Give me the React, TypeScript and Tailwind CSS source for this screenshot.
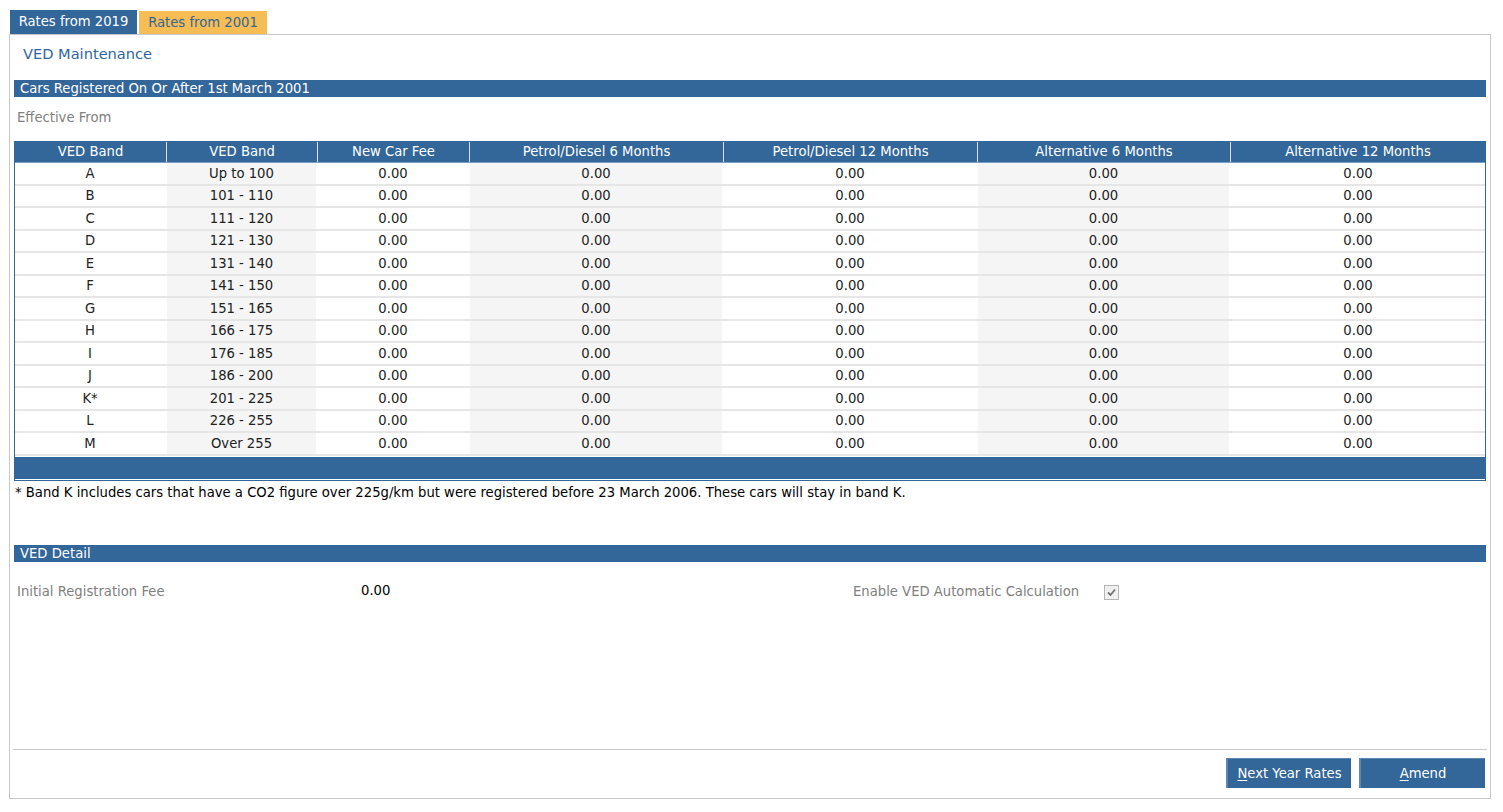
import React from "react";

const bands: [string, string][] = [
  ["A", "Up to 100"],
  ["B", "101 - 110"],
  ["C", "111 - 120"],
  ["D", "121 - 130"],
  ["E", "131 - 140"],
  ["F", "141 - 150"],
  ["G", "151 - 165"],
  ["H", "166 - 175"],
  ["I", "176 - 185"],
  ["J", "186 - 200"],
  ["K*", "201 - 225"],
  ["L", "226 - 255"],
  ["M", "Over 255"],
];

const headers = [
  "VED Band",
  "VED Band",
  "New Car Fee",
  "Petrol/Diesel 6 Months",
  "Petrol/Diesel 12 Months",
  "Alternative 6 Months",
  "Alternative 12 Months",
];

const widths = ["w-[152px]", "w-[151px]", "w-[152px]", "w-[254px]", "w-[254px]", "w-[253px]", "flex-1"];

export default function App() {
  return (
    <div
      className="w-[1503px] h-[812px] bg-white text-[13.2px] text-[#222]"
      style={{ fontFamily: 'Tahoma, "DejaVu Sans", sans-serif' }}
    >
      <div className="pt-[10px] pl-[10px] pr-[12px]">
        {/* Tabs */}
        <div className="flex items-end h-[24px] gap-[2px]">
          <div className="h-[24px] w-[127px] bg-[#336699] text-white flex items-center justify-center">
            Rates from 2019
          </div>
          <div className="h-[23px] w-[128px] bg-[#f6bd55] text-[#336699] flex items-center justify-center">
            Rates from 2001
          </div>
        </div>
        {/* Panel */}
        <div className="border border-[#c8c8c8] -ml-[1px] h-[765px] flex flex-col px-[4px]">
          <div className="text-[#2f66a0] text-[14.6px] pl-[9px] pt-[8px] h-[45px]">VED Maintenance</div>
          <div className="bg-[#336699] text-white h-[17px] leading-[17px] pl-[6px]">
            Cars Registered On Or After 1st March 2001
          </div>
          <div className="text-[#808080] pl-[3px] pt-[11px] h-[44px]">Effective From</div>
          {/* Table */}
          <div className="border border-[#336699] flex flex-col">
            <div className="flex bg-[#336699] text-white h-[21px] border-b border-[#7a9cc6]">
              {headers.map((h, i) => (
                <div
                  key={i}
                  className={`${widths[i]} flex items-center justify-center ${i < 6 ? "border-r border-[#d9e2ee]" : ""}`}
                >
                  {h}
                </div>
              ))}
            </div>
            {bands.map(([b, r], ri) => (
              <div key={ri} className="flex h-[22.5px] border-b-2 border-[#e6e6e6] last:border-b-0">
                {[b, r, "0.00", "0.00", "0.00", "0.00", "0.00"].map((v, i) => (
                  <div
                    key={i}
                    className={`${widths[i]} flex items-center justify-center pt-[1px] ${i % 2 === 1 ? "bg-[#f5f5f5]" : "bg-white"} ${i < 6 ? "border-r-2 border-white" : ""}`}
                  >
                    {v}
                  </div>
                ))}
              </div>
            ))}
            <div className="h-[22px] bg-[#336699] mt-[1px] mb-[1px]" />
          </div>
          <div className="text-black pl-[1px] pt-[2px] h-[64px]">
            * Band K includes cars that have a CO2 figure over 225g/km but were registered before 23 March 2006. These cars will stay in band K.
          </div>
          <div className="bg-[#336699] text-white h-[17px] leading-[17px] pl-[6px]">VED Detail</div>
          <div className="flex items-center pt-[19px] h-[39px]">
            <div className="w-[347px] pl-[3px] text-[#808080] pt-[3px]">Initial Registration Fee</div>
            <div className="w-[492px] text-black">0.00</div>
            <div className="w-[251px] text-[#808080] pt-[3px]">Enable VED Automatic Calculation</div>
            <div className="w-[15px] h-[15px] border border-[#b5b5b5] bg-[#f0f0f0] flex items-center justify-center mt-[3px]">
              <svg width="11" height="11" viewBox="0 0 11 11">
                <path d="M2 5.5 L4.5 8 L9 2.5" stroke="#707070" strokeWidth="1.8" fill="none" />
              </svg>
            </div>
          </div>
          <div className="flex-1" />
          <div className="border-t border-[#c8c8c8] -mx-[1px]" />
          <div className="flex justify-end gap-[8px] pt-[8px] pb-[10px] pr-[1px]">
            <button className="w-[125px] h-[30px] bg-[#336699] text-white text-[13.2px] border-l-2 border-t border-[#5d86b3]">
              <span className="underline underline-offset-2">N</span>ext Year Rates
            </button>
            <button className="w-[126px] h-[30px] bg-[#336699] text-white text-[13.2px] border-l-2 border-t border-[#5d86b3]">
              <span className="underline underline-offset-2">A</span>mend
            </button>
          </div>
        </div>
      </div>
    </div>
  );
}
